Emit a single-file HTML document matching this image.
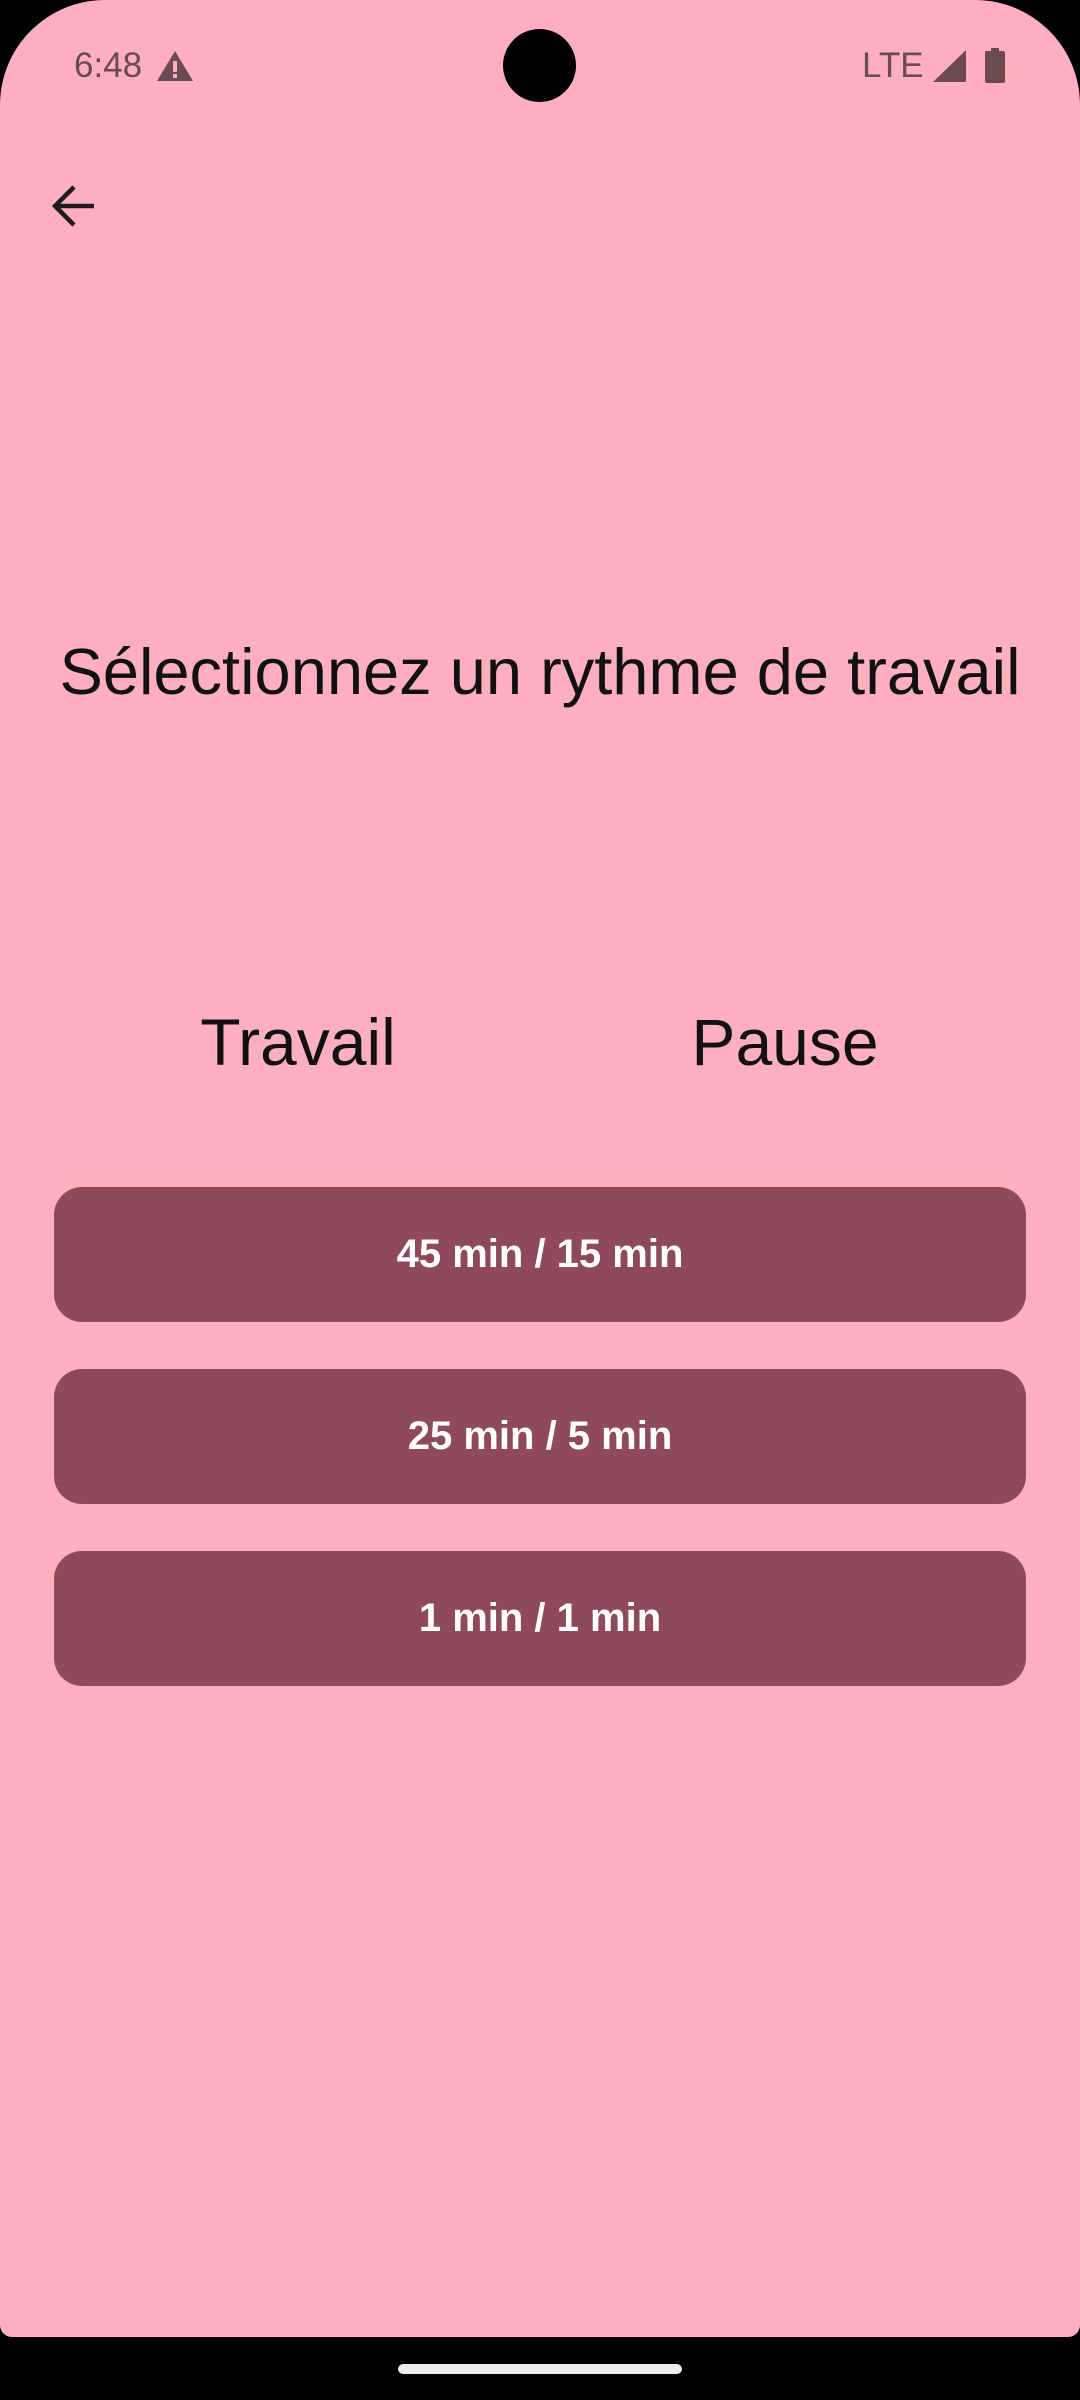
<!DOCTYPE html>
<html><head><meta charset="utf-8"><style>
html,body{margin:0;padding:0;background:#000;}
body{width:1080px;height:2400px;position:relative;overflow:hidden;font-family:"Liberation Sans",sans-serif;}
.screen{position:absolute;left:0;top:0;width:1080px;height:2337px;background:#ffafc0;border-radius:105px 105px 12px 12px;}
.cam{position:absolute;left:503px;top:29px;width:73px;height:73px;border-radius:50%;background:#000;}
.time{position:absolute;left:74px;top:46px;font-size:35px;color:#6b4a50;}
.title{position:absolute;left:0;width:1080px;top:634px;text-align:center;font-size:65px;color:#111;}
.lbl{position:absolute;top:1004px;font-size:66px;color:#111;width:400px;text-align:center;}
.btn{position:absolute;left:54px;width:972px;height:135px;border-radius:28px;background:#8e4a5b;color:#fff;font-weight:bold;font-size:40px;display:flex;align-items:center;justify-content:center;}
.home{position:absolute;left:398px;top:2364px;width:284px;height:10px;border-radius:5px;background:#ececec;}
</style></head><body>
<div class="screen">
<div class="cam"></div>
<div class="time">6:48</div>
<svg style="position:absolute;left:156px;top:50px" width="38" height="32" viewBox="0 0 38 32"><path d="M19 1 L37 31 L1 31 Z" fill="#6b4a50"/><rect x="17" y="11" width="4" height="11" fill="#ffafc0"/><rect x="17" y="24" width="4" height="4" fill="#ffafc0"/></svg>
<div class="time" style="left:862px;">LTE</div>
<svg style="position:absolute;left:933px;top:50px" width="34" height="32" viewBox="0 0 34 32"><path d="M33 0 L33 32 L0 32 Z" fill="#6b4a50"/></svg>
<svg style="position:absolute;left:984px;top:48px" width="22" height="35" viewBox="0 0 22 35"><rect x="7" y="0" width="8" height="4" fill="#6b4a50"/><rect x="1" y="3" width="20" height="32" rx="2" fill="#6b4a50"/></svg>
<svg style="position:absolute;left:48px;top:182px" width="50" height="48" viewBox="0 0 50 48"><path d="M46 24 H8 M26 5 L7 24 L26 43" stroke="#1d1b1c" stroke-width="4.5" fill="none"/></svg>
<div class="title">Sélectionnez un rythme de travail</div>
<div class="lbl" style="left:98px;">Travail</div>
<div class="lbl" style="left:585px;">Pause</div>
<div class="btn" style="top:1187px;">45 min / 15 min</div>
<div class="btn" style="top:1369px;">25 min / 5 min</div>
<div class="btn" style="top:1551px;">1 min / 1 min</div>
</div>
<div class="home"></div>
</body></html>
